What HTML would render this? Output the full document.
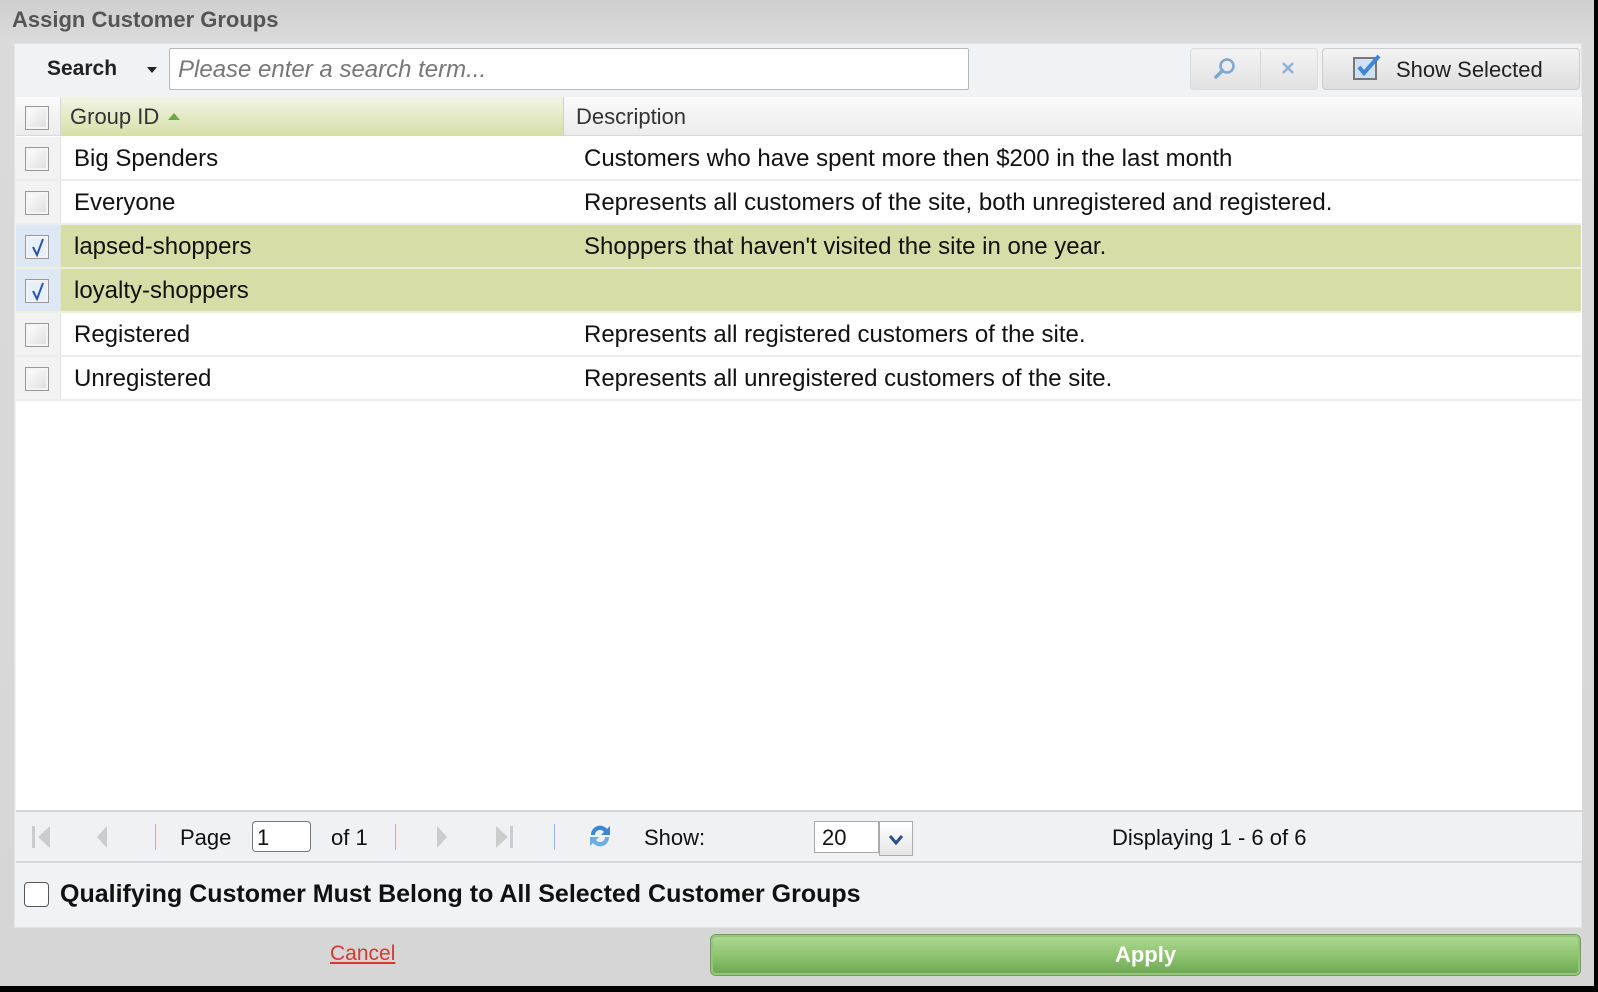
<!DOCTYPE html>
<html><head><meta charset="utf-8"><style>
*{box-sizing:border-box;margin:0;padding:0}
body{width:1598px;height:992px;background:#000;font-family:"Liberation Sans",Arial,sans-serif;position:relative;overflow:hidden}
.a{position:absolute}
#dlg{left:2px;top:2px;width:1594px;height:986px;background:linear-gradient(#cfcfcf,#dadada 40px,#d6d6d6);}
.cb{position:absolute;width:24px;height:24px;border:1px solid #999;background:linear-gradient(135deg,#fff,#ddd);box-shadow:inset 0 0 0 2px #f4f4f4}
.row{position:absolute;left:16px;width:1565px;height:44px;background:#fff;border-bottom:2px solid #ececec}
.row.sel{background:#d6dda6;border-bottom-color:#eef0dc}
.row .c0{position:absolute;left:0;top:0;width:45px;height:42px;background:#f2f2f2;border-right:1px solid #e2e2e2}
.row.sel .c0{background:#dde8f4}
.row span{position:absolute;top:8px;font-size:24px;color:#111}
.pg{position:absolute;top:825px;font-size:22px;color:#111}
.sep{position:absolute;top:824px;width:1px;height:26px;background:#9ab8dc}
</style></head><body>
<div id="dlg"></div>
<div class="a" style="left:12px;top:7px;font-weight:bold;font-size:22px;color:#555;white-space:nowrap">Assign Customer Groups</div>
<div class="a" style="left:14px;top:43px;width:1568px;height:885px;background:#f0f2f3;border:1px solid #e4e4e4"></div>
<div class="a" style="left:16px;top:97px;width:1566px;height:713px;background:#fff"></div>
<div class="a" style="left:47px;top:57px;font-weight:bold;font-size:21px;color:#222">Search</div>
<svg class="a" style="left:146px;top:66px" width="12" height="8"><path d="M1 1h10L6 7z" fill="#222"/></svg>
<div class="a" style="left:169px;top:48px;width:800px;height:42px;background:#fff;border:1px solid #b8b8b8;border-radius:2px"></div>
<div class="a" style="left:178px;top:56px;font-style:italic;font-size:24px;color:#777">Please enter a search term...</div>
<div class="a" style="left:1190px;top:48px;width:128px;height:42px;background:linear-gradient(#f3f3f3,#e2e2e2);border:1px solid #ddd;border-radius:4px"></div>
<div class="a" style="left:1260px;top:50px;width:1px;height:38px;background:#d5d5d5"></div>
<svg class="a" style="left:1212px;top:56px" width="26" height="26"><circle cx="15" cy="10" r="6.5" fill="none" stroke="#7fa6cf" stroke-width="2.5"/><path d="M10.5 14.5L4 21" stroke="#7fa6cf" stroke-width="3.5" stroke-linecap="round"/></svg>
<svg class="a" style="left:1280px;top:60px" width="16" height="16"><path d="M3 3l10 10M13 3L3 13" stroke="#8fb0d6" stroke-width="2.5"/></svg>
<div class="a" style="left:1322px;top:48px;width:258px;height:42px;background:linear-gradient(#f3f3f3,#dedede);border:1px solid #ccc;border-radius:4px"></div>
<svg class="a" style="left:1352px;top:53px" width="30" height="28"><rect x="2" y="5" width="22" height="21" fill="#cfe0f3" stroke="#777" stroke-width="2"/><path d="M7 14l5 6L27 3" fill="none" stroke="#3f86d6" stroke-width="4"/></svg>
<div class="a" style="left:1396px;top:57px;font-size:22px;color:#222">Show Selected</div>
<div class="a" style="left:16px;top:97px;width:1566px;height:39px;background:linear-gradient(#fafafa,#ececec);border-bottom:1px solid #d8d8d8"></div>
<div class="a" style="left:16px;top:97px;width:45px;height:39px;border-right:1px solid #d8d8d8"></div>
<div class="a" style="left:61px;top:97px;width:503px;height:39px;background:linear-gradient(#f2f4e4,#d7dfa8);border-right:1px solid #cfcfcf"></div>
<div class="cb" style="left:25px;top:106px"></div>
<div class="a" style="left:70px;top:104px;font-size:22px;color:#333">Group ID</div>
<svg class="a" style="left:167px;top:112px" width="14" height="9"><path d="M1 8h12L7 1z" fill="#6ea843"/></svg>
<div class="a" style="left:576px;top:104px;font-size:22px;color:#333">Description</div>
<div class="row" style="top:137px"><div class="c0"></div><span style="left:58px">Big Spenders</span><span style="left:568px">Customers who have spent more then $200 in the last month</span></div>
<div class="row" style="top:181px"><div class="c0"></div><span style="left:58px">Everyone</span><span style="left:568px">Represents all customers of the site, both unregistered and registered.</span></div>
<div class="row sel" style="top:225px"><div class="c0"></div><span style="left:58px">lapsed-shoppers</span><span style="left:568px">Shoppers that haven't visited the site in one year.</span></div>
<div class="row sel" style="top:269px"><div class="c0"></div><span style="left:58px">loyalty-shoppers</span></div>
<div class="row" style="top:313px"><div class="c0"></div><span style="left:58px">Registered</span><span style="left:568px">Represents all registered customers of the site.</span></div>
<div class="row" style="top:357px"><div class="c0"></div><span style="left:58px">Unregistered</span><span style="left:568px">Represents all unregistered customers of the site.</span></div>
<div class="cb" style="left:25px;top:147px"></div>
<div class="cb" style="left:25px;top:191px"></div>
<div class="cb" style="left:25px;top:235px;background:#e8f0fa"></div>
<div class="cb" style="left:25px;top:279px;background:#e8f0fa"></div>
<svg class="a" style="left:28px;top:236px" width="20" height="22"><path d="M5 11l4 8L15 3" fill="none" stroke="#2b54b0" stroke-width="2"/></svg>
<svg class="a" style="left:28px;top:280px" width="20" height="22"><path d="M5 11l4 8L15 3" fill="none" stroke="#2b54b0" stroke-width="2"/></svg>
<div class="cb" style="left:25px;top:323px"></div>
<div class="cb" style="left:25px;top:367px"></div>
<div class="a" style="left:16px;top:810px;width:1566px;height:53px;background:#eff1f2;border-top:2px solid #d6d6d6;border-bottom:2px solid #d6d6d6"></div>
<svg class="a" style="left:30px;top:824px" width="24" height="26"><rect x="2" y="2" width="3" height="22" fill="#ccc"/><path d="M20 2L8 13l12 11z" fill="#ccc"/></svg>
<svg class="a" style="left:94px;top:824px" width="16" height="26"><path d="M13 2L3 13l10 11z" fill="#ccc"/></svg>
<div class="sep" style="left:155px"></div>
<div class="pg" style="left:180px">Page</div>
<div class="a" style="left:252px;top:821px;width:59px;height:31px;background:#fff;border:1px solid #777;border-radius:4px"></div>
<div class="pg" style="left:257px">1</div>
<div class="pg" style="left:331px">of 1</div>
<div class="sep" style="left:395px"></div>
<svg class="a" style="left:434px;top:824px" width="16" height="26"><path d="M3 2l10 11L3 24z" fill="#ccc"/></svg>
<svg class="a" style="left:492px;top:824px" width="24" height="26"><path d="M4 2l12 11L4 24z" fill="#ccc"/><rect x="18" y="2" width="3" height="22" fill="#ccc"/></svg>
<div class="sep" style="left:554px"></div>
<svg class="a" style="left:585px;top:821px" width="30" height="30"><path d="M6 14a9 9 0 0 1 16-6l3-3v9h-9l3-3a5 5 0 0 0-9 3z" fill="#3b86d6"/><path d="M24 16a9 9 0 0 1-16 6l-3 3v-9h9l-3 3a5 5 0 0 0 9-3z" fill="#6aaee8"/></svg>
<div class="pg" style="left:644px">Show:</div>
<div class="a" style="left:814px;top:821px;width:65px;height:32px;background:#fff;border:1px solid #aaa"></div>
<div class="pg" style="left:822px;top:825px">20</div>
<div class="a" style="left:879px;top:821px;width:34px;height:35px;background:linear-gradient(#fff,#e6e6e6);border:1px solid #aaa"></div>
<svg class="a" style="left:888px;top:834px" width="16" height="12"><path d="M2 2l6 7 6-7" fill="none" stroke="#2b4f8f" stroke-width="3"/></svg>
<div class="pg" style="left:1112px">Displaying 1 - 6 of 6</div>
<div class="a" style="left:24px;top:882px;width:25px;height:25px;background:#fff;border:1px solid #555;border-radius:4px"></div>
<div class="a" style="left:60px;top:880px;font-weight:bold;font-size:25px;color:#111;white-space:nowrap">Qualifying Customer Must Belong to All Selected Customer Groups</div>
<div class="a" style="left:330px;top:942px;font-size:21px;color:#d43a2f;text-decoration:underline">Cancel</div>
<div class="a" style="left:711px;top:935px;width:869px;height:40px;background:linear-gradient(#acd892,#8cc26d 55%,#6fa955);border:2px solid #93c57a;border-radius:5px;box-shadow:0 0 0 1px #6e9e57;color:#fff;font-weight:bold;font-size:22px;text-align:center;line-height:36px">Apply</div>
</body></html>
